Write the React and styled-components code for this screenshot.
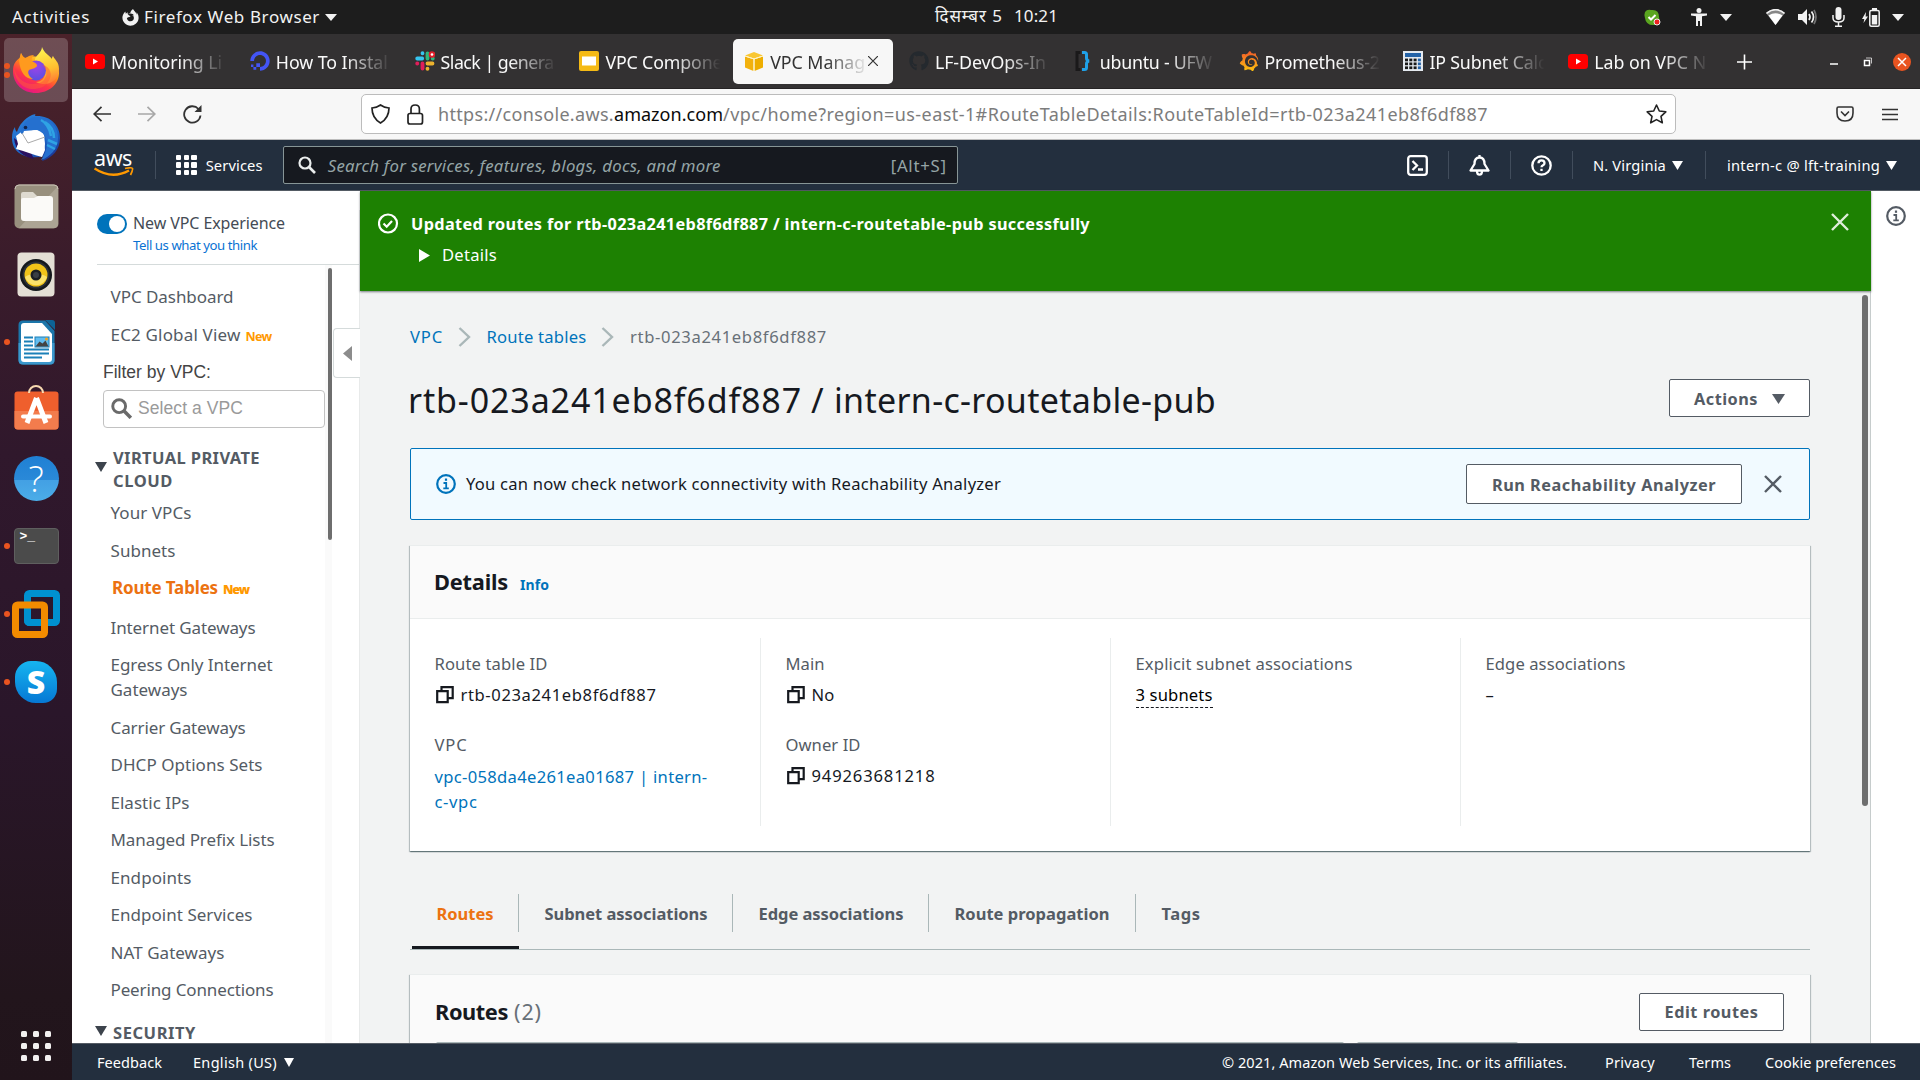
import React, { useLayoutEffect, useRef } from "react";
import styled, { createGlobalStyle, css } from "styled-components";
import { FaGithub, FaDigitalOcean, FaFirefoxBrowser } from "react-icons/fa";
import { SiGrafana } from "react-icons/si";

const Global = createGlobalStyle`
  * { box-sizing: border-box; }
  html, body { margin: 0; padding: 0; }
  body { font-family: "Noto Sans", "Open Sans", sans-serif; overflow: hidden; background: #fff; }
  svg { display: block; flex: none; }
`;

/* Text run whose letter spacing is adjusted so that it spans a given width. */
const Run = styled.span`
  display: inline-block;
  white-space: pre;
  flex: none;
`;
function Fit({ w, children, className }) {
  const ref = useRef(null);
  useLayoutEffect(() => {
    const el = ref.current;
    el.style.width = "max-content";
    el.style.letterSpacing = "0px";
    const natural = el.getBoundingClientRect().width;
    const n = el.textContent.length;
    el.style.letterSpacing = `${(w - natural) / n}px`;
    el.style.width = `${w}px`;
  }, [w, children]);
  return <Run ref={ref} className={className}>{children}</Run>;
}

const Screen = styled.div`
  width: 1920px;
  height: 1080px;
  display: flex;
  flex-direction: column;
  overflow: hidden;
`;

/* ---------- desktop top bar ---------- */
const TopBar = styled.header`
  height: 34px;
  flex: none;
  display: grid;
  grid-template-columns: 1fr auto 1fr;
  align-items: center;
  background: #1d1d1d;
  color: #f2f2f2;
  font-size: 17px;
  line-height: 24px;
`;
const TopLeft = styled.div`
  display: flex;
  align-items: center;
  padding-left: 12px;
`;
const AppMenu = styled.div`
  display: flex;
  align-items: center;
  margin-left: 32px;
  gap: 5px;
`;
const Clock = styled.div`
  display: flex;
  gap: 9px;
  padding-left: 73px;
  padding-bottom: 2px;
`;
const Tray = styled.div`
  display: flex;
  align-items: center;
  justify-content: flex-end;
  padding-right: 16px;
`;
const TraySlot = styled.span`
  display: flex;
  margin-left: ${(p) => p.$before || 0}px;
`;

const Down = ({ w = 11, h = 8, color = "#fff" }) => (
  <svg width={w} height={h} viewBox="0 0 12 9" preserveAspectRatio="none"><path d="M0 0h12L6 9z" fill={color} /></svg>
);

/* ---------- dock ---------- */
const Body = styled.div`
  flex: 1;
  display: flex;
  min-height: 0;
`;
const Dock = styled.nav`
  width: 72px;
  flex: none;
  display: flex;
  flex-direction: column;
  gap: 4px;
  padding: 4px 4px 19px;
  background: linear-gradient(#4b222a 0, #3a1c2b 22%, #30182c 40%, #2a162a 65%, #22151c 92%, #21141b 100%);
`;
const DockSlot = styled.div`
  position: relative;
  height: 64px;
  display: flex;
  align-items: center;
  justify-content: center;
  padding-bottom: ${(p) => p.$lift || 0}px;
  border-radius: 5px;
  background: ${(p) => (p.$active ? "rgba(255,255,255,.2)" : "none")};
`;
const Dots = styled.div`
  position: absolute;
  left: 0;
  top: 0;
  height: 100%;
  display: flex;
  flex-direction: column;
  justify-content: center;
  gap: 3px;
`;
const Dot = styled.i`
  width: 6px;
  height: 6px;
  border-radius: 50%;
  background: #e95420;
`;
const AppsGrid = styled.div`
  margin: auto auto 0;
  display: grid;
  grid-template-columns: repeat(3, 6px);
  gap: 6px;
`;
const AppsCell = styled.i`
  height: 6px;
  border-radius: 1.5px;
  background: #f2f0f0;
`;

const FirefoxIcon = () => (
  <svg width="46" height="47" viewBox="0 0 46 47">
    <defs>
      <linearGradient id="ffb" x1=".85" y1=".1" x2=".3" y2="1">
        <stop offset="0" stopColor="#fff44f" /><stop offset=".35" stopColor="#ff980e" />
        <stop offset=".65" stopColor="#ff3647" /><stop offset="1" stopColor="#e31587" />
      </linearGradient>
      <linearGradient id="ffy" x1=".5" y1="0" x2=".7" y2="1">
        <stop offset="0" stopColor="#fff44f" /><stop offset=".6" stopColor="#ffbd2f" /><stop offset="1" stopColor="#ff7139" />
      </linearGradient>
      <radialGradient id="ffp" cx=".5" cy=".3" r=".7">
        <stop offset="0" stopColor="#a043e8" /><stop offset="1" stopColor="#5b4fe0" />
      </radialGradient>
    </defs>
    <path d="M8 7c1 2 2 4 4 5l6-2 8 1 12 2c5 4 8 9 8 14 0 11-10 20-23 20S0 38 0 25C0 18 3 14 7 12z" fill="url(#ffb)" />
    <path d="M29 1c0 6-8 9-7 14 2 4 9 4 10 10 1 7-4 11-9 11 12 6 23-2 23-13 0-7-4-9-6-13-1 1-1 2-1 3-3-4-8-6-10-12z" fill="url(#ffy)" />
    <circle cx="23" cy="24.500" r="10" fill="url(#ffp)" />
    <path d="M6 14l2-7c1 3 3 5 5 5 2-2 5-3 8-3-2 2-3 4-2 6 3 2 5 2 5 5-1 2-5 3-8 4-2 2 0 7 4 9-8 0-13-7-14-19z" fill="#ff9a1e" />
    <path d="M1 21c2 10 9 17 19 17 7 0 11-3 12-6 3-4 1-10-3-13 9 1 11 11 6 17-3 5-9 7-15 7C10 43 1 35 1 21z" fill="#ff5a36" opacity=".5" />
  </svg>
);
const ThunderbirdIcon = () => (
  <svg width="48" height="48" viewBox="0 0 48 48">
    <defs><linearGradient id="tb" x1=".2" y1="0" x2=".9" y2="1"><stop offset="0" stopColor="#2a7fd8" /><stop offset=".6" stopColor="#1b62c4" /><stop offset="1" stopColor="#1d2a86" /></linearGradient></defs>
    <path d="M3 13c0 3 1 4 2 5 2-7 7-13 15-17 3-1 4-1 3 1 15-1 25 9 25 22 0 12-8 20-18 23l3-5C17 46 0 41 0 24c0-5 1-8 3-11z" fill="url(#tb)" />
    <path d="M2 24c1 13 10 19 20 21l-4-8z" fill="#2b1160" />
    <path d="M4 22l8-6 19 0 2 20-3 7C22 41 12 37 4 35l2-5z" fill="#fff" />
    <path d="M9 17c-1 5 4 3 8 1 6-3 12-2 16 4 4 8 1 17-4 24 9-3 17-11 17-22C46 11 36 3 23 3 16 4 11 9 9 17z" fill="#2570cf" />
    <path d="M12 17l13-1 7 5 1 9-2 10-14-4-12-3 4-8z" fill="#fff" />
    <path d="M10 19l6 10 17-6" stroke="#aaa" fill="none" />
    <path d="M33 8c5 3 9 9 9 16M29 6c4 2 9 8 10 16M36 26l9 4M35 31l8 4" stroke="#2fa3e4" strokeWidth="2.500" fill="none" />
    <circle cx="13.500" cy="13.500" r="1.800" fill="#10254f" />
  </svg>
);
const FilesIcon = () => (
  <svg width="45" height="45" viewBox="0 0 45 45">
    <rect x=".5" y=".5" width="44" height="44" rx="5" fill="#98907e" />
    <path d="M44 2v38q0 4-4 4H5z" fill="#aca494" /><path d="M1 5q0-4 4-4h35q4 0 4 4" stroke="#c9c3b5" fill="none" />
    <path d="M7 10q0-2 2-2h10l4 4h12v6H7z" fill="#dedad0" />
    <path d="M7 16q0-2 2-2h11l4-2h12q3 0 3 3v19q0 3-3 3H10q-3 0-3-3z" fill="#fbfaf8" />
  </svg>
);
const MusicIcon = () => (
  <svg width="38" height="45" viewBox="0 0 38 45">
    <rect x=".5" y=".5" width="37" height="44" rx="4" fill="#e4dfd5" />
    <circle cx="19" cy="23" r="16" fill="#14181c" /><circle cx="19" cy="23" r="13.500" fill="#2a3036" />
    <circle cx="19" cy="23" r="11.500" fill="#f0c419" /><path d="M8 25a11.500 11.500 0 0 0 22 0c-4-4-18-4-22 0z" fill="#fae36b" />
    <circle cx="19" cy="23" r="5.500" fill="#1c2023" /><circle cx="19" cy="23" r="3" fill="#3a3f44" />
  </svg>
);
const WriterIcon = () => (
  <svg width="37" height="45" viewBox="0 0 37 45">
    <path d="M5 .5h22L36.500 11v29q0 4.500-4.500 4.500H5Q.5 44.500.5 40V5Q.5.5 5 .5z" fill="#1b76aa" />
    <path d="M.5 23h36v17q0 4.500-4.500 4.500H5Q.5 44.500.5 40z" fill="#3b98cc" />
    <path d="M27 0h7q3 0 3 3v7z" fill="#0d6396" />
    <path d="M6 3h18l10 11v25q0 3-3 3H6q-3 0-3-3V6q0-3 3-3z" fill="#fff" />
    <path d="M6 17.500h9M6 21.500h9M6 25.500h9M6 29.500h25M6 33.500h25M6 37.500h18" stroke="#1b80b8" strokeWidth="2" />
    <rect x="17" y="17" width="14" height="10" fill="#62bdf0" stroke="#1b80b8" /><path d="M17.500 26.500l4-5 3 2 3-3 3 6z" fill="#444" /><circle cx="28.500" cy="19" r="1.500" fill="#f5a21b" />
  </svg>
);
const SoftwareIcon = () => (
  <svg width="45" height="45" viewBox="0 0 45 45">
    <rect x=".5" y="6.500" width="44" height="38" rx="3" fill="#ef5f2d" /><path d="M.5 26h44v15q0 3.500-3.500 3.500H4Q.5 44.500.5 41z" fill="#f37c4d" />
    <path d="M15 8a7 7 0 0 1 14 0" fill="none" stroke="#f7d9b0" strokeWidth="2" />
    <path d="M22.500 13l-9.500 25M22.500 13L32 38" stroke="#fff" strokeWidth="5" fill="none" />
    <path d="M9 31.500h27" stroke="#fff" strokeWidth="4" strokeLinecap="round" />
  </svg>
);
const HelpGlyph = styled.span`
  width: 45px;
  height: 45px;
  border-radius: 50%;
  display: flex;
  align-items: center;
  justify-content: center;
  font: 300 36px/45px "Open Sans", sans-serif;
  color: #fff;
  background: linear-gradient(#1f80d4 0 0, #2a89d8 54%, #43a0e4 54%, #4bade8);
`;
const TerminalGlyph = styled.span`
  width: 45px;
  height: 36px;
  border-radius: 4px;
  padding: 0 5px;
  font: 700 13px/15px "Liberation Mono", monospace;
  color: #fff;
  background: #4b4b4b;
  border: 1px solid #5f5f5f;
`;
const VmwareIcon = () => (
  <svg width="48" height="48" viewBox="0 0 48 48" fill="none" strokeWidth="7">
    <rect x="15.500" y="3.500" width="29" height="29" rx="2" stroke="#0091d0" />
    <rect x="3.500" y="15" width="29" height="29.500" rx="2" stroke="#f38b00" />
    <path d="M15.500 22v8q0 2.500 3 2.500h10" stroke="#0091d0" />
  </svg>
);
const SkypeGlyph = styled.span`
  width: 42px;
  height: 42px;
  border-radius: 16px 21px 14px 21px;
  display: flex;
  align-items: center;
  justify-content: center;
  font: 800 32px/42px "Open Sans", sans-serif;
  color: #fff;
  background: linear-gradient(#16b5f0, #0678d4);
`;

/* ---------- browser chrome ---------- */
const Browser = styled.div`
  flex: 1;
  min-width: 0;
  display: flex;
  flex-direction: column;
`;
const TabStrip = styled.div`
  height: 55px;
  flex: none;
  display: flex;
  align-items: center;
  padding-left: 2px;
  gap: 5px;
  background: #333132;
  border-bottom: 1px solid #262425;
`;
const BrowserTab = styled.div`
  width: 159.800px;
  height: 45px;
  flex: none;
  display: flex;
  align-items: center;
  padding-left: 11px;
  gap: 6px;
  border-radius: 5px;
  font-size: 17.800px;
  color: ${(p) => (p.$active ? "#333" : "#fafafa")};
  background: ${(p) => (p.$active ? "#f7f7f7" : "none")};
`;
const Favicon = styled.span`
  width: 20px;
  height: 20px;
  flex: none;
  display: flex;
  align-items: center;
  justify-content: center;
`;
const TabTitle = styled.span`
  width: ${(p) => (p.$active ? 96 : 118)}px;
  overflow: hidden;
  flex: none;
  padding-top: 2px;
  line-height: 26px;
  -webkit-mask-image: linear-gradient(90deg, #000 58%, transparent ${(p) => (p.$active ? 103 : 98)}%);
  mask-image: linear-gradient(90deg, #000 58%, transparent ${(p) => (p.$active ? 103 : 98)}%);
`;
const TabClose = styled.span`
  margin-left: -4px;
`;
const StripEnd = styled.div`
  display: flex;
  align-items: center;
  justify-content: flex-end;
  flex: 1;
  padding: 1px 9px 0 0;
  color: #fff;
`;
const NavBar = styled.div`
  height: 51px;
  flex: none;
  display: flex;
  align-items: center;
  padding-left: 19px;
  background: #f7f7f7;
  border-bottom: 1px solid #bdbdbd;
`;
const NavButton = styled.span`
  width: 22px;
  display: flex;
  justify-content: center;
  margin-right: 23px;
  opacity: ${(p) => (p.$off ? 0.4 : 1)};
`;
const UrlBar = styled.div`
  width: 1315px;
  height: 40px;
  margin-left: 135px;
  display: flex;
  align-items: center;
  padding: 0 8px 0 9px;
  border: 1px solid #bcbcbc;
  border-radius: 5px;
  background: #fff;
  font-size: 18px;
  color: #7c7c7c;
`;
const LockSlot = styled.span`
  margin-left: 17px;
`;
const UrlText = styled.span`
  display: flex;
  margin-left: 14px;
  margin-right: auto;
`;
const Host = styled.span`
  color: #0a0a0a;
`;
const NavEnd = styled.div`
  flex: 1;
  display: flex;
  justify-content: flex-end;
  align-items: center;
  gap: 28px;
  padding-right: 22px;
`;

/* ---------- AWS header ---------- */
const AwsHeader = styled.div`
  height: 51px;
  flex: none;
  display: flex;
  align-items: center;
  background: #232f3e;
  border-bottom: 1px solid #545b64;
  color: #fff;
  font-size: 14.700px;
  line-height: 22px;
`;
const AwsLogo = styled.div`
  width: 40px;
  margin: -5px 0 0 22px;
  display: flex;
  flex-direction: column;
  align-items: flex-start;
  font-size: 21.500px;
  line-height: 19px;
`;
const Rule = styled.i`
  width: 1px;
  height: 28px;
  background: #414d5c;
  margin: 0 ${(p) => p.$gap}px 0 ${(p) => p.$before || p.$gap}px;
`;
const ServicesGrid = styled.div`
  display: grid;
  grid-template-columns: repeat(3, 5.300px);
  gap: 2.400px;
  margin-right: 9px;
`;
const ServicesCell = styled.i`
  height: 5.300px;
  border-radius: 1px;
  background: #fff;
`;
const AwsSearch = styled.div`
  width: 675px;
  height: 38px;
  margin: 0 0 0 20px;
  padding: 0 10px 0 14px;
  display: flex;
  align-items: center;
  gap: 12px;
  border: 1px solid #879596;
  border-radius: 2px;
  background: #16191f;
  color: #95a5a6;
  font-size: 16.800px;
`;
const Placeholder = styled.em`
  padding-top: 1px;
`;
const Shortcut = styled.span`
  margin-left: auto;
  padding-top: 1px;
`;
const AwsEnd = styled.div`
  flex: 1;
  display: flex;
  justify-content: flex-end;
  align-items: center;
  padding-right: 23px;
`;
const AwsMenu = styled.span`
  display: flex;
  align-items: center;
  gap: 6px;
`;

/* ---------- console body ---------- */
const Console = styled.div`
  flex: 1;
  min-height: 0;
  display: flex;
`;
const Sidebar = styled.aside`
  width: 288px;
  flex: none;
  position: relative;
  background: #fff;
  overflow: hidden;
`;
const Experience = styled.div`
  height: 74px;
  margin-left: 25px;
  padding-top: 20px;
  display: flex;
  gap: 6px;
  border-bottom: 1px solid #d5dbdb;
  font-size: 16px;
  line-height: 24px;
  color: #444b55;
`;
const Toggle = styled.span`
  width: 30px;
  height: 20px;
  margin-top: 3px;
  padding: 2px;
  display: flex;
  justify-content: flex-end;
  border-radius: 10px;
  background: #0073bb;
  &::after { content: ""; width: 16px; height: 16px; border-radius: 50%; background: #fff; }
`;
const Feedback = styled.a`
  display: block;
  font-size: 13.200px;
  line-height: 18px;
  margin-top: 1px;
  color: #0972d3;
`;
const NavScroll = styled.div`
  display: flex;
  flex-direction: column;
`;
const NavItem = styled.div`
  margin-top: ${(p) => p.$top}px;
  padding-left: ${(p) => (p.$active ? 40 : 38.5)}px;
  height: 24px;
  line-height: 24px;
  font-size: 17px;
  display: flex;
  gap: 5px;
  color: ${(p) => (p.$active ? "#ec7211" : "#545b64")};
  font-weight: ${(p) => (p.$active ? 700 : 400)};
`;
const NewTag = styled.b`
  font-size: 12.500px;
  line-height: 27px;
  color: #ff9900;
`;
const FilterLabel = styled.div`
  margin: 13px 0 6px 31px;
  height: 24px;
  font: 17.500px/24px "Liberation Sans", Arial, sans-serif;
  color: #444;
`;
const FilterInput = styled.div`
  width: 222px;
  height: 38px;
  margin-left: 31px;
  padding: 0 0 2px 7px;
  display: flex;
  align-items: center;
  gap: 6px;
  border: 1px solid #c2c2c2;
  border-radius: 4px;
  font: 17.500px/24px "Liberation Sans", Arial, sans-serif;
  color: #9a9a9a;
`;
const NavHeading = styled.div`
  margin-top: ${(p) => p.$top}px;
  margin-bottom: 9px;
  padding-left: 23px;
  display: flex;
  gap: 6px;
  font-size: 16.500px;
  line-height: 23px;
  font-weight: 700;
  color: #545b64;
`;
const HeadingArrow = styled.span`
  padding-top: ${(p) => p.$top}px;
`;
const HeadingLines = styled.div`
  display: flex;
  flex-direction: column;
  align-items: flex-start;
`;
const SideScrollbar = styled.i`
  position: absolute;
  left: 256px;
  top: 77px;
  width: 4px;
  height: 272px;
  border-radius: 2px;
  background: #6e6e6e;
`;
const SideTrack = styled.i`
  position: absolute;
  left: 253px;
  top: 74px;
  width: 7px;
  bottom: 0;
  background: #fafafa;
`;
const SideEdge = styled.i`
  position: absolute;
  right: 0;
  top: 19px;
  bottom: 0;
  width: 1px;
  background: #e8eaea;
`;
const Collapse = styled.span`
  position: absolute;
  right: 0;
  top: 137px;
  width: 27px;
  height: 50px;
  padding-left: 9px;
  display: flex;
  align-items: center;
  border: 1px solid #d5dbdb;
  border-right: 0;
  border-radius: 4px 0 0 4px;
  background: #fff;
`;

const Content = styled.div`
  flex: 1;
  min-width: 0;
  display: flex;
  flex-direction: column;
  position: relative;
  background: #f2f3f3;
  border-right: 1px solid #c6cccc;
`;
const Flash = styled.div`
  height: 100px;
  flex: none;
  margin-right: -1px;
  padding: 22px 22px 0 18px;
  display: flex;
  background: #1d8102;
  color: #fff;
  font-size: 16.600px;
  line-height: 24px;
  box-shadow: 0 1px 2px rgba(0, 10, 20, .5);
  z-index: 1;
`;
const FlashText = styled.div`
  flex: 1;
  margin-left: 12px;
`;
const FlashTitle = styled.div`
  font-weight: 700;
  font-size: 16.300px;
  line-height: 22px;
`;
const FlashDetails = styled.div`
  margin: 9px 0 0 8px;
  display: flex;
  gap: 12px;
  align-items: center;
  line-height: 22px;
`;
const ContentScrollbar = styled.i`
  position: absolute;
  right: 2px;
  top: 104px;
  width: 6px;
  height: 511px;
  border-radius: 3px;
  background: #6e6e6e;
`;
const Inner = styled.div`
  flex: 1;
  min-height: 0;
  overflow: hidden;
  padding: 34px 60px 0 50px;
`;
const Crumbs = styled.div`
  height: 24px;
  display: flex;
  align-items: center;
  font-size: 16.600px;
  line-height: 24px;
  color: #687078;
`;
const CrumbSep = styled.span`
  margin: 0 16px 0 14.500px;
`;
const link = css`
  color: #0073bb;
  text-decoration: none;
`;
const Link = styled.a`
  ${link}
`;
const TitleRow = styled.div`
  height: 38px;
  margin-top: 30px;
  display: flex;
  align-items: center;
  justify-content: space-between;
`;
const Title = styled.h1`
  margin: 0 0 0 -2px;
  padding-top: 4px;
  display: flex;
  gap: 9px;
  font-size: 34px;
  line-height: 38px;
  font-weight: 400;
  color: #16191f;
`;
const Button = styled.button`
  width: ${(p) => p.$w}px;
  height: ${(p) => p.$h || 38}px;
  padding: 1px 0 0;
  flex: none;
  display: flex;
  align-items: center;
  justify-content: center;
  gap: 14px;
  border: 1px solid #545b64;
  border-radius: 2px;
  background: #fff;
  color: #545b64;
  font: 700 16.300px/24px "Noto Sans", sans-serif;
`;
const Notice = styled.div`
  height: 72px;
  margin-top: 31px;
  padding: 0 27px 0 25px;
  display: flex;
  align-items: center;
  border: 1px solid #0073bb;
  border-radius: 2px;
  background: #f1faff;
  font-size: 16.600px;
  line-height: 24px;
  color: #16191f;
`;
const NoticeText = styled.span`
  margin: 0 0 1px 10px;
`;
const NoticeAction = styled.span`
  margin: 0 22px 0 auto;
`;
const Card = styled.section`
  margin-top: ${(p) => p.$top}px;
  background: #fff;
  border-top: 1px solid #eaeded;
  box-shadow: 0 1px 1px rgba(0, 28, 36, .35), 1px 1px 1px rgba(0, 28, 36, .2), -1px 1px 1px rgba(0, 28, 36, .2);
`;
const CardHead = styled.div`
  height: ${(p) => p.$h}px;
  padding: ${(p) => p.$drop || 0}px 26px 0 ${(p) => p.$inset || 24}px;
  display: flex;
  align-items: center;
  background: #fafafa;
  border-bottom: 1px solid ${(p) => (p.$plain ? "transparent" : "#eaeded")};
`;
const CardTitle = styled.h2`
  margin: 0 12px 0 0;
  font-size: 21.800px;
  line-height: 30px;
  font-weight: 700;
  color: #16191f;
`;
const InfoLink = styled.a`
  ${link}
  font-size: 14px;
  font-weight: 700;
  margin-top: 4px;
`;
const Count = styled.span`
  font-size: 21.500px;
  line-height: 30px;
  color: #687078;
  margin-left: -6px;
  margin-right: auto;
`;
const Columns = styled.div`
  height: 232px;
  padding: 19px 0 0;
  display: grid;
  grid-template-columns: repeat(4, 350px);
  grid-template-rows: 188px;
`;
const Column = styled.div`
  padding: 13px 0 0 24.500px;
  border-left: 1px solid #eaeded;
  &:first-child { border-color: transparent; padding-left: 23.500px; }
`;
const Field = styled.div`
  margin-bottom: 25px;
  font-size: 16.600px;
  line-height: 25px;
`;
const Label = styled.div`
  color: #545b64;
  height: 25px;
  margin-bottom: 6px;
`;
const Value = styled.div`
  display: flex;
  align-items: center;
  gap: 7px;
  color: #16191f;
`;
const VpcLink = styled.a`
  ${link}
  margin-top: 7px;
  display: flex;
  flex-direction: column;
  align-items: flex-start;
`;
const Dotted = styled.span`
  height: 26px;
  display: inline-block;
  border-bottom: 1px dashed #16191f;
`;
const Tabs = styled.div`
  margin-top: 43px;
  height: 56px;
  display: flex;
  padding-left: 2px;
  border-bottom: 1px solid #aab7b8;
`;
const Tab = styled.div`
  height: 55px;
  width: ${(p) => p.$w}px;
  padding: 1px 0 0 ${(p) => (p.$active ? 24.5 : 25.5)}px;
  line-height: 38px;
  font-size: 16.500px;
  font-weight: 700;
  color: ${(p) => (p.$active ? "#ec7211" : "#545b64")};
  border-bottom: 3px solid ${(p) => (p.$active ? "#16191f" : "transparent")};
  background: linear-gradient(#aab7b8, #aab7b8) right top / ${(p) => (p.$last ? 0 : 1)}px 38px no-repeat;
`;
const FilterRow = styled.div`
  display: flex;
  gap: 13px;
  margin-top: -6px;
  padding-left: 26px;
  background: #fafafa;
`;
const FilterBox = styled.div`
  width: ${(p) => p.$w}px;
  height: 38px;
  border: 2px solid #aab7b8;
  border-radius: 2px;
  background: #fff;
`;
const HelpRail = styled.aside`
  width: 49px;
  flex: none;
  padding: 15px 0 0 15px;
  background: #fff;
`;
const Footer = styled.footer`
  height: 37px;
  flex: none;
  display: flex;
  align-items: center;
  border-top: 1px solid #545b64;
  padding: 0 24px 0 25px;
  background: #232f3e;
  color: #fff;
  font-size: 14.500px;
  line-height: 22px;
`;
const FootMenu = styled.span`
  display: flex;
  align-items: center;
  gap: 7px;
  margin-left: 31px;
`;
const FootEnd = styled.div`
  margin-left: auto;
  display: flex;
  gap: 34px;
`;
const Copyright = styled.span`
  margin-right: 4px;
`;

/* ---------- small icons ---------- */
const YoutubeIcon = () => (
  <svg width="20" height="15" viewBox="0 0 20 15"><rect width="20" height="15" rx="3.500" fill="#f00" /><path d="M8 4.500l5 3-5 3z" fill="#fff" /></svg>
);
const SlackIcon = () => (
  <svg width="20" height="20" viewBox="0 0 20 20" strokeWidth="3.800" strokeLinecap="round">
    <path d="M2.200 7.500h5M7.500 2.200v.1" stroke="#36c5f0" /><path d="M12.500 2.500v5M17.700 7.500h.1" stroke="#2eb67d" />
    <path d="M12.500 12.500h5M12.500 17.700v.1" stroke="#ecb22e" /><path d="M7.500 12.500v5M2.200 12.500h.1" stroke="#e01e5a" />
    <circle cx="17" cy="3.500" r="3.300" fill="#e01e2a" /><circle cx="17" cy="3.500" r="1.300" fill="#fff" />
  </svg>
);
const SlidesIcon = () => (
  <svg width="20" height="20" viewBox="0 0 20 20"><rect width="20" height="20" rx="2" fill="#f5ba15" /><rect x="3" y="5.500" width="14" height="9" fill="#fff" /></svg>
);
const CubeIcon = () => (
  <svg width="18" height="19" viewBox="0 0 18 19">
    <path d="M9 0l9 3.500-9 3-9-3z" fill="#f9c733" /><path d="M0 4.500l8.500 2.700V19L0 15.500z" fill="#f2b10d" /><path d="M18 4.500L9.500 7.200V19L18 15.500z" fill="#eeae00" />
    <path d="M0 4l9 3 9-3M9 7v12" stroke="#fff3c4" fill="none" />
  </svg>
);
const BracesIcon = () => (
  <svg width="20" height="20" viewBox="0 0 20 20" fill="none" strokeWidth="3"><path d="M6.500 1.500H3v17h3.500" stroke="#1a191a" /><path d="M8 1.500h2.500q2 0 2 2V7q0 2.500 2.500 3-2.500.5-2.500 3v3.500q0 2-2 2H8" stroke="#1fa1e8" /></svg>
);
const CalcIcon = () => (
  <svg width="20" height="20" viewBox="0 0 20 20"><rect width="20" height="20" fill="#e5eaf0" /><rect x="2" y="2" width="16" height="4" fill="#2463a8" />
    {[0, 1, 2].map((r) => [0, 1, 2, 3].map((c) => <rect key={`${r}${c}`} x={2 + c * 4.300} y={7.600 + r * 3.900} width="3" height="2.700" fill={c === 3 ? "#2463a8" : "#181818"} />))}
  </svg>
);
const GrafanaIcon = () => (
  <>
    <svg width="0" height="0"><defs><linearGradient id="graf" x1="0" y1="1" x2="0" y2="0"><stop offset="0" stopColor="#fcc10f" /><stop offset="1" stopColor="#f1592a" /></linearGradient></defs></svg>
    <SiGrafana size={20} fill="url(#graf)" />
  </>
);
const SearchIcon = ({ size, color, width }) => (
  <svg width={size} height={size} viewBox="0 0 18 18" fill="none" stroke={color} strokeWidth={width}><circle cx="7" cy="7" r="5.500" /><path d="M11 11l6 6" strokeWidth={width * 1.200} /></svg>
);
const InfoIcon = ({ color }) => (
  <svg width="20" height="20" viewBox="0 0 20 20" fill="none" stroke={color} strokeWidth="2.200">
    <circle cx="10" cy="10" r="8.800" /><path d="M7.500 9h2.700v5M7.300 14.300h5.500" strokeWidth="1.800" /><path d="M10 4.500v2.300" />
  </svg>
);
const CrossIcon = ({ color }) => (
  <svg width="18" height="18" viewBox="0 0 18 18" stroke={color} strokeWidth="2.400"><path d="M1 1l16 16M17 1L1 17" /></svg>
);
const CopyIcon = () => (
  <svg width="19" height="18" viewBox="-1 0 19 18" fill="none" stroke="#16191f" strokeWidth="2.200"><path d="M1.200 5.200h10.500v11H1.200z" /><path d="M5.500 5V1.200h11.200v11H12" /></svg>
);
const Chevron = () => (
  <CrumbSep><svg width="13" height="20" viewBox="0 0 13 20" fill="none" stroke="#aab7b8" strokeWidth="2.400"><path d="M1.500 1l9.500 9-9.500 9" /></svg></CrumbSep>
);

const browserTabs = [
  { icon: <YoutubeIcon />, text: "Monitoring Li", w: 111 },
  { icon: <FaDigitalOcean size={20} color="#4355f5" />, text: "How To Instal", w: 112 },
  { icon: <SlackIcon />, text: "Slack | genera", w: 113 },
  { icon: <SlidesIcon />, text: "VPC Compone", w: 117 },
  { icon: <CubeIcon />, text: "VPC Manag", w: 95, active: true },
  { icon: <FaGithub size={20} color="#24292e" />, text: "LF-DevOps-In", w: 111 },
  { icon: <BracesIcon />, text: "ubuntu - UFW", w: 112 },
  { icon: <GrafanaIcon />, text: "Prometheus-2", w: 115 },
  { icon: <CalcIcon />, text: "IP Subnet Calc", w: 117 },
  { icon: <YoutubeIcon />, text: "Lab on VPC N", w: 112 },
];

const dockItems = [
  { icon: <FirefoxIcon />, dots: 2, active: true, lift: 1 },
  { icon: <ThunderbirdIcon /> },
  { icon: <FilesIcon /> },
  { icon: <MusicIcon /> },
  { icon: <WriterIcon />, dots: 1 },
  { icon: <SoftwareIcon />, lift: 5 },
  { icon: <HelpGlyph>?</HelpGlyph> },
  { icon: <TerminalGlyph>&gt;_</TerminalGlyph>, dots: 1 },
  { icon: <VmwareIcon />, dots: 1 },
  { icon: <SkypeGlyph>S</SkypeGlyph>, dots: 1 },
];

const navItems = [
  { text: "Your VPCs", w: 81, top: 0 },
  { text: "Subnets", w: 65, top: 14 },
  { text: "Route Tables", w: 106, top: 13, active: true, tag: true },
  { text: "Internet Gateways", w: 145, top: 16 },
  { text: "Egress Only Internet", w: 162, top: 13 },
  { text: "Gateways", w: 77, top: 1 },
  { text: "Carrier Gateways", w: 135, top: 14 },
  { text: "DHCP Options Sets", w: 152, top: 13 },
  { text: "Elastic IPs", w: 79, top: 14 },
  { text: "Managed Prefix Lists", w: 164, top: 13 },
  { text: "Endpoints", w: 81, top: 14 },
  { text: "Endpoint Services", w: 142, top: 13 },
  { text: "NAT Gateways", w: 114, top: 14 },
  { text: "Peering Connections", w: 163, top: 13 },
];

const nineCells = [0, 1, 2, 3, 4, 5, 6, 7, 8];

export default function App() {
  return (
    <Screen>
      <Global />
      <TopBar>
        <TopLeft>
          <Fit w={78}>Activities</Fit>
          <AppMenu>
            <FaFirefoxBrowser size={17} color="#f2f2f2" />
            <Fit w={176}>Firefox Web Browser</Fit>
            <Down w={12} h={7} color="#f2f2f2" />
          </AppMenu>
        </TopLeft>
        <Clock><Fit w={70}>दिसम्बर 5</Fit><Fit w={44}>10:21</Fit></Clock>
        <Tray>
          <TraySlot>
            <svg width="17" height="17" viewBox="0 0 17 17"><path d="M1 3q2-3 6-2 8-1 8 7 2 8-4 8-9 1-10-7-1-4 0-6z" fill="#5aa51f" /><path d="M4.500 8l2.500 2.500 4.500-4.500" stroke="#fff" strokeWidth="2" fill="none" /><circle cx="13" cy="13" r="3" fill="#e22" stroke="#eee" /></svg>
          </TraySlot>
          <TraySlot $before={30}>
            <svg width="16" height="18" viewBox="0 0 16 18" fill="#f2f2f2"><circle cx="8" cy="2.500" r="2.500" /><path d="M0 5.500h16v2l-5 .8V18H9v-5H7v5H5V8.300L0 7.500z" /></svg>
          </TraySlot>
          <TraySlot $before={13}><Down w={12} h={7} color="#f2f2f2" /></TraySlot>
          <TraySlot $before={34}>
            <svg width="19" height="16" viewBox="0 0 19 16"><path d="M0 4Q9.500-4 19 4l-9.500 12z" fill="#f2f2f2" opacity=".5" /><path d="M2.500 6.500q7-4.500 14 0L9.500 16z" fill="#fff" /><path d="M.5 4.300Q9.500-3 18.500 4.300" stroke="#f2f2f2" fill="none" strokeWidth="1.500" /></svg>
          </TraySlot>
          <TraySlot $before={13}>
            <svg width="19" height="16" viewBox="0 0 19 16" fill="none" stroke="#f2f2f2" strokeWidth="1.700"><path d="M0 5h4l5-5v16l-5-5H0z" fill="#f2f2f2" stroke="none" /><path d="M11 5q2 3 0 6M13.500 2.500q4 5.500 0 11" /><path d="M16 1q4 7 0 14" opacity=".4" /></svg>
          </TraySlot>
          <TraySlot $before={15}>
            <svg width="13" height="20" viewBox="0 0 13 20"><rect x="3.500" width="6" height="13" rx="3" fill="#f2f2f2" /><path d="M1 8v3q0 4 5.500 4T12 11V8M6.500 15v4M3 19.200h7" stroke="#f2f2f2" strokeWidth="1.500" fill="none" /></svg>
          </TraySlot>
          <TraySlot $before={17}>
            <svg width="18" height="19" viewBox="0 0 18 19"><path d="M4 4L0 11h2.300L1.500 15 6 8.500H3.600z" fill="#f2f2f2" /><path d="M10 2V0h5v2" fill="#f2f2f2" /><rect x="7.800" y="2.500" width="9.400" height="15.700" rx="1.500" fill="none" stroke="#f2f2f2" strokeWidth="1.500" /><rect x="9.800" y="7" width="5.400" height="9.500" fill="#f2f2f2" /></svg>
          </TraySlot>
          <TraySlot $before={12}><Down w={12} h={7} color="#f2f2f2" /></TraySlot>
        </Tray>
      </TopBar>

      <Body>
        <Dock>
          {dockItems.map((d, i) => (
            <DockSlot key={i} $active={d.active} $lift={d.lift}>
              {d.dots && <Dots><Dot />{d.dots > 1 && <Dot />}</Dots>}
              {d.icon}
            </DockSlot>
          ))}
          <AppsGrid>{nineCells.map((i) => <AppsCell key={i} />)}</AppsGrid>
        </Dock>

        <Browser>
          <TabStrip>
            {browserTabs.map((t) => (
              <BrowserTab key={t.text} $active={t.active}>
                <Favicon>{t.icon}</Favicon>
                <TabTitle $active={t.active}><Fit w={t.w}>{t.text}</Fit></TabTitle>
                {t.active && <TabClose><svg width="10" height="10" viewBox="0 0 10 10" stroke="#333" strokeWidth="1.200"><path d="M0 0l10 10M10 0L0 10" /></svg></TabClose>}
              </BrowserTab>
            ))}
            <StripEnd>
              <svg width="174" height="18" viewBox="0 0 174 18" fill="none" stroke="#fff">
                <path d="M0 9h15M7.500 1.500v15" strokeWidth="1.600" />
                <path d="M93 11h8" strokeWidth="1.500" />
                <path d="M127.500 7.500h5v5h-5z" strokeWidth="1.500" /><path d="M129 5h5.500v5.500" strokeWidth="1" opacity=".7" />
                <circle cx="165" cy="9" r="9" fill="#e95420" stroke="none" /><path d="M161 5l8 8M169 5l-8 8" strokeWidth="1.500" />
              </svg>
            </StripEnd>
          </TabStrip>

          <NavBar>
            <NavButton><svg width="18" height="16" viewBox="0 0 18 16" fill="none" stroke="#333" strokeWidth="1.700"><path d="M18 8H1M8.500.8L1.200 8l7.300 7.200" /></svg></NavButton>
            <NavButton $off><svg width="18" height="16" viewBox="0 0 18 16" fill="none" stroke="#333" strokeWidth="1.700"><path d="M0 8h17M9.500.8L16.800 8l-7.300 7.200" /></svg></NavButton>
            <NavButton><svg width="19" height="19" viewBox="0 0 19 19" fill="none" stroke="#333" strokeWidth="1.800"><path d="M17.500 10.500A8.200 8.200 0 1 1 15.500 4" /><path d="M18.500 0v7h-7z" fill="#333" stroke="none" /></svg></NavButton>
            <UrlBar>
              <svg width="19" height="20" viewBox="0 0 19 20" fill="none" stroke="#222" strokeWidth="1.700"><path d="M9.500 1q3.500 2.500 8.500 3 0 10-8.500 15Q1 14 1 4q5-.5 8.500-3z" /></svg>
              <LockSlot><svg width="17" height="21" viewBox="0 0 17 21" fill="none" stroke="#222" strokeWidth="1.700"><rect x="1" y="9.500" width="14.500" height="10.500" rx="2" /><path d="M4 9.500V5q0-4 4.200-4t4.200 4v4.500" /></svg></LockSlot>
              <UrlText>
                <Fit w={176}>https://console.aws.</Fit>
                <Host><Fit w={109}>amazon.com</Fit></Host>
                <Fit w={765}>/vpc/home?region=us-east-1#RouteTableDetails:RouteTableId=rtb-023a241eb8f6df887</Fit>
              </UrlText>
              <svg width="21" height="20" viewBox="0 0 21 20" fill="none" stroke="#222" strokeWidth="1.600" strokeLinejoin="round"><path d="M10.500 1l2.800 6 6.500.8-4.800 4.500 1.300 6.500-5.800-3.200-5.800 3.200L6 12.300 1.200 7.800 7.700 7z" /></svg>
            </UrlBar>
            <NavEnd>
              <svg width="18" height="16" viewBox="0 0 18 16" fill="none" stroke="#333" strokeWidth="1.600"><path d="M2.500 1h13q1.500 0 1.500 1.500V7q0 8-8 8T1 7V2.500Q1 1 2.500 1z" /><path d="M5 5.500l4 4 4-4" /></svg>
              <svg width="16" height="13" viewBox="0 0 16 13" stroke="#333" strokeWidth="1.500"><path d="M0 1.500h16M0 6.500h16M0 11.500h16" /></svg>
            </NavEnd>
          </NavBar>

          <AwsHeader>
            <AwsLogo>
              <Fit w={38}>aws</Fit>
              <svg width="40" height="10" viewBox="0 0 40 10" fill="none" stroke="#ff9900"><path d="M.5 1.500Q18 13 35 3.500" strokeWidth="2.400" /><path d="M31 1.500q7-1.500 7.500 0t-2 6.500" strokeWidth="1.700" /></svg>
            </AwsLogo>
            <Rule $before={21} $gap={20} />
            <ServicesGrid>{nineCells.map((i) => <ServicesCell key={i} />)}</ServicesGrid>
            <Fit w={57}>Services</Fit>
            <AwsSearch>
              <SearchIcon size={18} color="#eaeded" width={2.200} />
              <Placeholder><Fit w={393}>Search for services, features, blogs, docs, and more</Fit></Placeholder>
              <Shortcut><Fit w={56}>[Alt+S]</Fit></Shortcut>
            </AwsSearch>
            <AwsEnd>
              <svg width="21" height="21" viewBox="0 0 21 21" fill="none" stroke="#fff" strokeWidth="2.300"><rect x="1.200" y="1.200" width="18.600" height="18.600" rx="2.500" /><path d="M5.500 6l4.500 4.500L5.500 15M11 14.500h5" /></svg>
              <Rule $gap={20} />
              <svg width="21" height="21" viewBox="0 0 21 21" fill="none" stroke="#fff" strokeWidth="2.300" strokeLinejoin="round"><path d="M10.500 2.500q5 0 5 6.500l4 6.500h-18l4-6.500q0-6.500 5-6.500zM10.500 0v2.500M8 16q0 3.700 2.500 3.700T13 16" /></svg>
              <Rule $gap={20} />
              <svg width="21" height="21" viewBox="0 0 21 21" fill="none" stroke="#fff" strokeWidth="2.300"><circle cx="10.500" cy="10.500" r="9.200" /><path d="M7.500 8.300q0-3 3-3t3 2.700q0 1.500-1.500 2.300t-1.500 2" /><path d="M10.500 13.800v2.200" /></svg>
              <Rule $gap={20} />
              <AwsMenu><Fit w={73}>N. Virginia</Fit><Down w={11} h={9} /></AwsMenu>
              <Rule $before={22} $gap={21} />
              <AwsMenu><Fit w={153}>intern-c @ lft-training</Fit><Down w={11} h={9} /></AwsMenu>
            </AwsEnd>
          </AwsHeader>

          <Console>
            <Sidebar>
              <SideTrack />
              <Experience>
                <Toggle />
                <div>
                  <Fit w={152}>New VPC Experience</Fit>
                  <Feedback><Fit w={124}>Tell us what you think</Fit></Feedback>
                </div>
              </Experience>
              <NavScroll>
                <NavItem $top={20}><Fit w={123}>VPC Dashboard</Fit></NavItem>
                <NavItem $top={14}><Fit w={130}>EC2 Global View</Fit><NewTag><Fit w={26}>New</Fit></NewTag></NavItem>
                <FilterLabel><Fit w={108}>Filter by VPC:</Fit></FilterLabel>
                <FilterInput><SearchIcon size={21} color="#6a6a6a" width={2.500} /><Fit w={105}>Select a VPC</Fit></FilterInput>
                <NavHeading $top={18}>
                  <HeadingArrow $top={16}><Down w={12} h={10} color="#3c434c" /></HeadingArrow>
                  <HeadingLines><Fit w={147}>VIRTUAL PRIVATE</Fit><Fit w={60}>CLOUD</Fit></HeadingLines>
                </NavHeading>
                {navItems.map((n) => (
                  <NavItem key={n.text} $top={n.top} $active={n.active}>
                    <Fit w={n.w}>{n.text}</Fit>{n.tag && <NewTag><Fit w={26}>New</Fit></NewTag>}
                  </NavItem>
                ))}
                <NavHeading $top={19}>
                  <HeadingArrow $top={5}><Down w={12} h={10} color="#3c434c" /></HeadingArrow>
                  <Fit w={83}>SECURITY</Fit>
                </NavHeading>
              </NavScroll>
              <SideEdge />
              <SideScrollbar />
              <Collapse><svg width="9" height="15" viewBox="0 0 9 15"><path d="M9 0v15L0 7.500z" fill="#8c8c8c" /></svg></Collapse>
            </Sidebar>

            <Content>
              <Flash>
                <svg width="21" height="21" viewBox="0 0 21 21" fill="none" stroke="#fff" strokeWidth="2.200"><circle cx="10" cy="10.500" r="9" /><path d="M5.500 10.500l3.200 3.200 5.300-5.800" /></svg>
                <FlashText>
                  <FlashTitle><Fit w={679}>Updated routes for rtb-023a241eb8f6df887 / intern-c-routetable-pub successfully</Fit></FlashTitle>
                  <FlashDetails><svg width="11" height="13" viewBox="0 0 11 13"><path d="M0 0l11 6.500L0 13z" fill="#fff" /></svg><Fit w={55}>Details</Fit></FlashDetails>
                </FlashText>
                <CrossIcon color="#dfeeda" />
              </Flash>
              <Inner>
                <Crumbs>
                  <Link><Fit w={33}>VPC</Fit></Link><Chevron />
                  <Link><Fit w={100}>Route tables</Fit></Link><Chevron />
                  <Fit w={197}>rtb-023a241eb8f6df887</Fit>
                </Crumbs>
                <TitleRow>
                  <Title><Fit w={394}>rtb-023a241eb8f6df887</Fit><Fit w={14}>/</Fit><Fit w={382}>intern-c-routetable-pub</Fit></Title>
                  <Button $w={141}><Fit w={64}>Actions</Fit><Down w={13} h={10} color="#545b64" /></Button>
                </TitleRow>
                <Notice>
                  <InfoIcon color="#0073bb" />
                  <NoticeText><Fit w={535}>You can now check network connectivity with Reachability Analyzer</Fit></NoticeText>
                  <NoticeAction><Button $w={276} $h={40}><Fit w={224}>Run Reachability Analyzer</Fit></Button></NoticeAction>
                  <CrossIcon color="#545b64" />
                </Notice>

                <Card $top={25}>
                  <CardHead $h={73}><CardTitle><Fit w={74}>Details</Fit></CardTitle><InfoLink><Fit w={29}>Info</Fit></InfoLink></CardHead>
                  <Columns>
                    <Column>
                      <Field><Label><Fit w={113}>Route table ID</Fit></Label><Value><CopyIcon /><Fit w={196}>rtb-023a241eb8f6df887</Fit></Value></Field>
                      <Field><Label><Fit w={33}>VPC</Fit></Label><VpcLink><Fit w={273}>vpc-058da4e261ea01687 | intern-</Fit><Fit w={43}>c-vpc</Fit></VpcLink></Field>
                    </Column>
                    <Column>
                      <Field><Label><Fit w={39}>Main</Fit></Label><Value><CopyIcon /><Fit w={23}>No</Fit></Value></Field>
                      <Field><Label><Fit w={75}>Owner ID</Fit></Label><Value><CopyIcon /><Fit w={124}>949263681218</Fit></Value></Field>
                    </Column>
                    <Column>
                      <Field><Label><Fit w={217}>Explicit subnet associations</Fit></Label><Dotted><Fit w={77}>3 subnets</Fit></Dotted></Field>
                    </Column>
                    <Column>
                      <Field><Label><Fit w={140}>Edge associations</Fit></Label><Value><Fit w={10}>–</Fit></Value></Field>
                    </Column>
                  </Columns>
                </Card>

                <Tabs>
                  <Tab $w={107} $active><Fit w={57}>Routes</Fit></Tab>
                  <Tab $w={214}><Fit w={163}>Subnet associations</Fit></Tab>
                  <Tab $w={196}><Fit w={145}>Edge associations</Fit></Tab>
                  <Tab $w={207}><Fit w={155}>Route propagation</Fit></Tab>
                  <Tab $w={100} $last><Fit w={39}>Tags</Fit></Tab>
                </Tabs>

                <Card $top={24}>
                  <CardHead $h={73} $drop={1} $inset={25} $plain>
                    <CardTitle><Fit w={73}>Routes</Fit></CardTitle>
                    <Count><Fit w={28}>(2)</Fit></Count>
                    <Button $w={145}><Fit w={94}>Edit routes</Fit></Button>
                  </CardHead>
                  <FilterRow><FilterBox $w={908} /><FilterBox $w={161} /></FilterRow>
                </Card>
              </Inner>
              <ContentScrollbar />
            </Content>

            <HelpRail><InfoIcon color="#545b64" /></HelpRail>
          </Console>

          <Footer>
            <Fit w={65}>Feedback</Fit>
            <FootMenu><Fit w={84}>English (US)</Fit><Down w={10} h={9} /></FootMenu>
            <FootEnd>
              <Copyright><Fit w={345}>© 2021, Amazon Web Services, Inc. or its affiliates.</Fit></Copyright>
              <Fit w={50}>Privacy</Fit>
              <Fit w={42}>Terms</Fit>
              <Fit w={131}>Cookie preferences</Fit>
            </FootEnd>
          </Footer>
        </Browser>
      </Body>
    </Screen>
  );
}
